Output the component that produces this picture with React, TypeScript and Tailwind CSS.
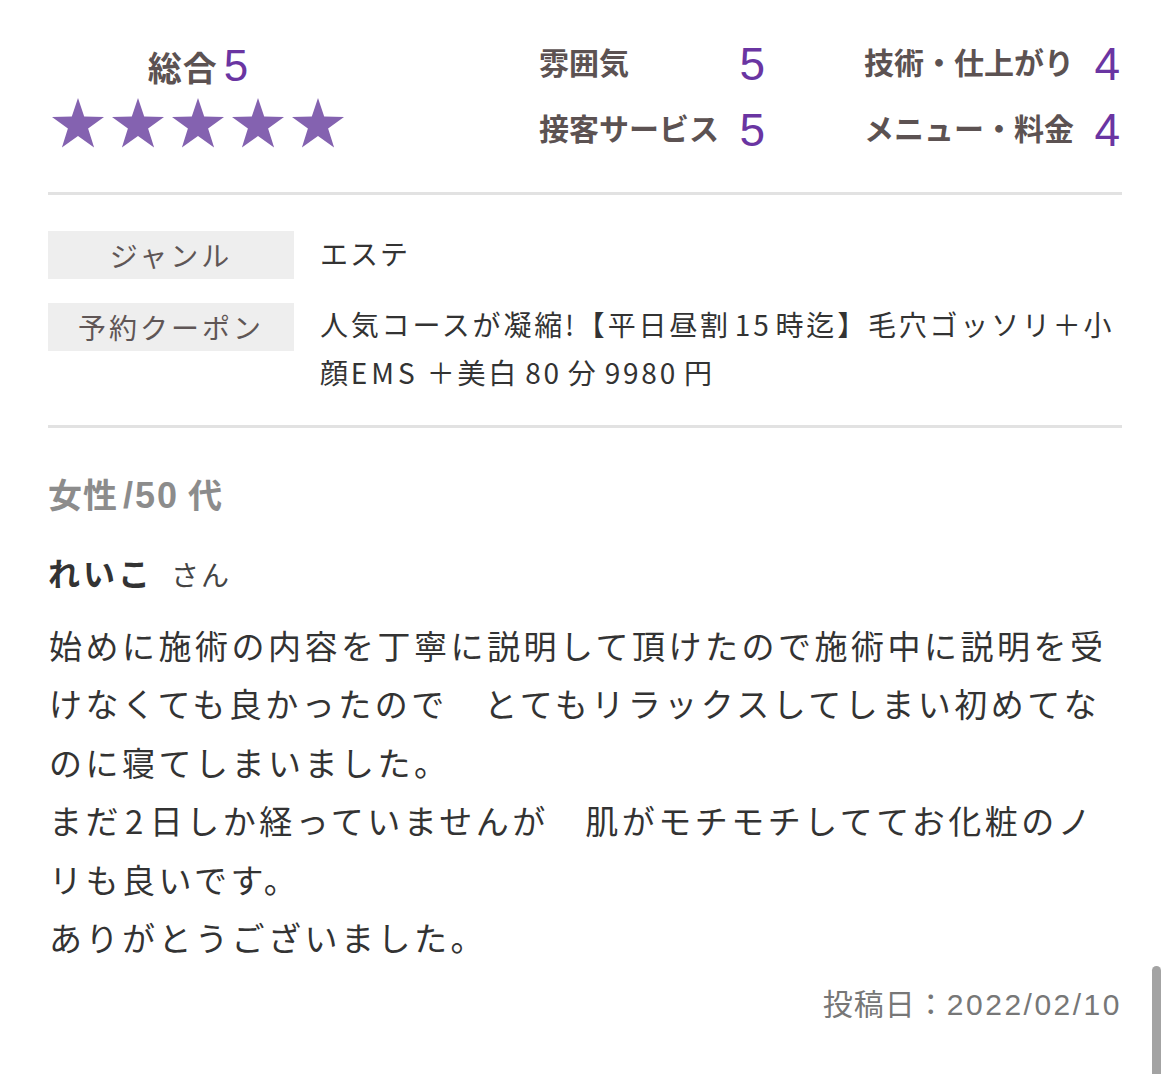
import React from "react";

const JP = { fontFamily: '"Noto Sans CJK JP", "Noto Sans", sans-serif' };
const NUM = { fontFamily: '"Liberation Sans", Arial, sans-serif' };

function Star() {
  return (
    <svg width="52" height="50" viewBox="0 0 52 50">
      <polygon
        points="26,0 32.2,18.6 52,18.9 36.1,30.6 42.1,49.5 26,38.1 9.9,49.5 15.9,30.6 0,18.9 19.8,18.6"
        fill="#8462b0"
      />
    </svg>
  );
}

function Rating({ label, value }: { label: string; value: string }) {
  return (
    <div className="flex items-center justify-between h-[66px]">
      <span className="text-[30px] font-bold text-[#5c5252] whitespace-nowrap -mt-[5px]" style={JP}>
        {label}
      </span>
      <span className="text-[46px] text-[#6a35a2] leading-none" style={NUM}>
        {value}
      </span>
    </div>
  );
}

function L({ children, m = 5 }: { children: React.ReactNode; m?: number }) {
  return <span style={{ marginLeft: m, marginRight: m }}>{children}</span>;
}

export default function App() {
  return (
    <div className="relative w-[1170px] h-[1074px] bg-white overflow-hidden" style={JP}>
      <div className="px-[48px]">
        {/* top ratings */}
        <div className="flex items-start justify-between">
          <div className="w-[300px] flex flex-col items-center pt-[44px]">
            <div className="flex items-center h-[44px]">
              <span className="text-[34px] font-bold text-[#5c5252] tracking-[1px]" style={JP}>
                総合
              </span>
              <span className="text-[44px] text-[#6a35a2] ml-[6px] leading-none" style={NUM}>
                5
              </span>
            </div>
            <div className="flex gap-[8px] mt-[10px]">
              <Star />
              <Star />
              <Star />
              <Star />
              <Star />
            </div>
          </div>
          <div className="grid grid-cols-[226px_256px] gap-x-[99px] pt-[31px] mr-[2px]">
            <Rating label="雰囲気" value="5" />
            <Rating label="技術・仕上がり" value="4" />
            <Rating label="接客サービス" value="5" />
            <Rating label="メニュー・料金" value="4" />
          </div>
        </div>

        <div className="mt-[29px] h-[3px] bg-[#e2e2e2]" />

        {/* info table */}
        <div className="mt-[36px] flex flex-col gap-[24px]">
          <div className="flex items-start">
            <div className="w-[246px] h-[48px] shrink-0 bg-[#eeeeee] flex items-center justify-center text-[28px] text-[#5f5656] tracking-[3px]">
              ジャンル
            </div>
            <div className="ml-[26px] text-[28px] leading-[44px] text-[#333333] tracking-[2px]">エステ</div>
          </div>
          <div className="flex items-start">
            <div className="w-[246px] h-[48px] shrink-0 bg-[#eeeeee] flex items-center justify-center text-[28px] text-[#5f5656] tracking-[3px]">
              予約クーポン
            </div>
            <div className="ml-[26px] text-[28px] leading-[48px] text-[#333333] tracking-[2.8px] -mt-[3px]">
              <div className="whitespace-nowrap">
                人気コースが凝縮!【平日昼割<L m={4}>15</L>時迄】毛穴ゴッソリ＋小
              </div>
              <div className="whitespace-nowrap">
                顔<span className="tracking-[4px] mr-[8px]">EMS</span>＋美白<L m={6}>80</L>分<L m={6}>9980</L>円
              </div>
            </div>
          </div>
        </div>

        <div className="mt-[29px] h-[3px] bg-[#e2e2e2]" />

        {/* reviewer */}
        <div className="mt-[46px] h-[40px] leading-[40px] text-[34px] font-bold text-[#8c8c8c] tracking-[1px] whitespace-nowrap">
          女性<span className="ml-[5px] mr-[9px] tracking-[2px] text-[36px]" style={NUM}>/50</span>代
        </div>
        <div className="mt-[38px] h-[40px] flex items-baseline leading-[40px]">
          <span className="text-[32px] font-bold text-[#333333] tracking-[3px]">れいこ</span>
          <span className="text-[28px] text-[#444444] ml-[18px] tracking-[2px]">さん</span>
        </div>

        {/* body */}
        <div className="mt-[24px] text-[33px] leading-[58.4px] text-[#333333] tracking-[3.5px] pl-[1px]">
          <div className="whitespace-nowrap">始めに施術の内容を丁寧に説明して頂けたので施術中に説明を受</div>
          <div className="whitespace-nowrap">けなくても良かったので　とてもリラックスしてしまい初めてな</div>
          <div className="whitespace-nowrap">のに寝てしまいました。</div>
          <div className="whitespace-nowrap">
            まだ<L m={3}>2</L>日しか経っていませんが　肌がモチモチしててお化粧のノ
          </div>
          <div className="whitespace-nowrap">リも良いです。</div>
          <div className="whitespace-nowrap">ありがとうございました。</div>
        </div>

        <div className="mt-[16px] h-[40px] leading-[40px] text-right text-[30px] text-[#777777] tracking-[1px]">
          投稿日：<span style={NUM} className="tracking-[2.5px]">2022/02/10</span>
        </div>
      </div>

      {/* overlay scrollbar */}
      <div className="absolute left-[1152px] top-[966px] w-[9px] h-[130px] rounded-full bg-[#a3a3a3]" />
    </div>
  );
}
